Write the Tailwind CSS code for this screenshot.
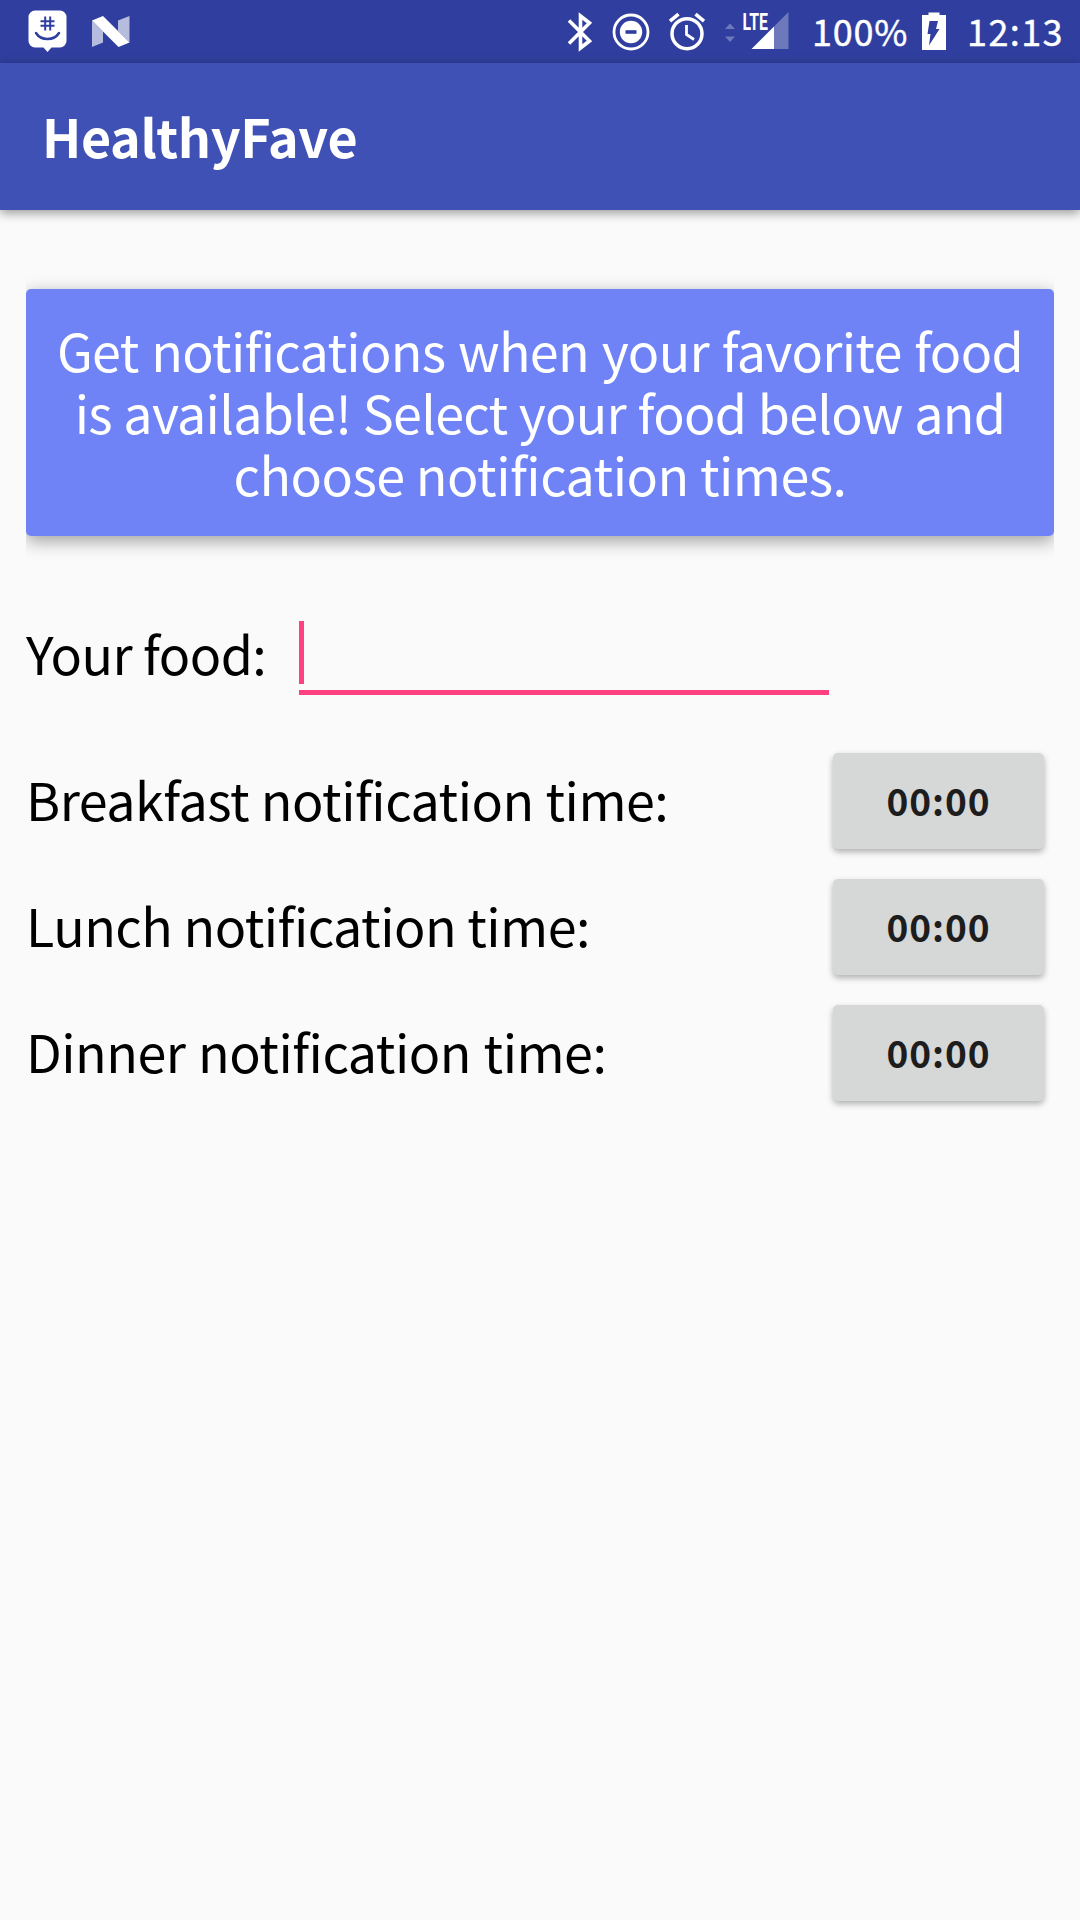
<!DOCTYPE html>
<html lang="en">
<head>
    <meta charset="utf-8"/>
    <meta content="width=device-width, initial-scale=1.0" name="viewport"/>
    <title>HealthyFave</title>
    <script src="https://cdn.jsdelivr.net/npm/@tailwindcss/browser@4"></script>
</head>
<body class="bg-[#fafafa] min-h-screen overflow-hidden font-['Noto_Sans_CJK_SC','Noto_Sans',sans-serif] text-[52px] leading-[62px] text-black whitespace-nowrap">
    <!-- Status bar -->
    <div class="flex h-[63px] bg-[#303f9f] text-white pl-7">
        <svg class="w-[39px] h-[63px]" viewBox="28 0 39 63">
            <path fill="#fff" d="M35 10.500h25a6.500 6.500 0 0 1 6.500 6.500v24a6.500 6.500 0 0 1-6.500 6.500h-8.500L47.500 52l-4-4.500H35a6.500 6.500 0 0 1-6.500-6.500V17a6.500 6.500 0 0 1 6.500-6.500z"/>
            <path fill="none" stroke="#303f9f" stroke-width="2" d="M45.200 16.500v14M50.200 16.500v14M40.500 21.200h14M40.500 25.800h14"/>
            <path fill="none" stroke="#303f9f" stroke-width="2.500" stroke-linecap="round" d="M36 33c5 8 18 8 23 0"/>
        </svg>
        <svg class="w-[38px] h-[63px] ml-[25px]" viewBox="92 0 38 63">
            <path fill="#fff" fill-opacity=".65" d="M92 20.500l11 11V42.500L92 47zM129.500 16v26.500L118 31V20.500z"/>
            <path fill="#fff" d="M92 20.500L103 16l26.500 26.500L118.500 47z"/>
        </svg>
        <svg class="w-[26px] h-[63px] ml-[437px]" viewBox="567 0 26 63">
            <path fill="none" stroke="#fff" stroke-width="3.600" d="M569 20.500L589.500 41l-9 7V16l9 7L569 43.500"/>
        </svg>
        <svg class="w-[38px] h-[63px] ml-[19px]" viewBox="612 0 38 63">
            <circle cx="631" cy="32" r="17" fill="none" stroke="#fff" stroke-width="2.800"/>
            <circle cx="631" cy="32" r="11.200" fill="#fff"/>
            <path fill="#303f9f" d="M625.500 30.200h11v3.600h-11z"/>
        </svg>
        <svg class="w-[38px] h-[63px] ml-[18px]" viewBox="668 0 38 63">
            <circle cx="687" cy="33.700" r="15" fill="none" stroke="#fff" stroke-width="3.500"/>
            <path fill="none" stroke="#fff" stroke-width="3.600" d="M670 21.200l8.500-7M704 21.200l-8.500-7"/>
            <path fill="none" stroke="#fff" stroke-width="2.800" d="M686.500 25v9.500l7.500 5"/>
        </svg>
        <svg class="w-[65px] h-[63px] ml-[18px]" viewBox="724 0 65 63">
            <path fill="#fff" fill-opacity=".3" d="M725 29l5-5.500 5 5.500zM725 36.500h10l-5 5.500z"/>
            <path fill="#fff" fill-opacity=".3" d="M788.500 12v37H774V26.500z"/>
            <path fill="#fff" d="M774 26.500V49h-22.500z"/>
            <text x="742.500" y="30" fill="#fff" font-family="Roboto" font-weight="700" font-size="24" textLength="25.500" lengthAdjust="spacingAndGlyphs">LTE</text>
        </svg>
        <span class="ml-[23px] w-[97px] text-[36px] leading-[60px] tracking-[0.8px] [-webkit-text-stroke:0.4px_white]">100%</span>
        <svg class="w-[24px] h-[63px] ml-[13px]" viewBox="922 0 24 63">
            <path fill="#fff" d="M928.500 12.500h11V15h6.500v35h-24V15h6.500z"/>
            <path fill="#303f9f" d="M929.500 21h8.500l-2 8h3.500l-10.500 16.500 1.500-11.500h-3z"/>
        </svg>
        <span class="ml-[21px] text-[36px] leading-[60px] tracking-[1.4px] [-webkit-text-stroke:0.4px_white]">12:13</span>
    </div>

    <!-- App bar -->
    <div class="relative h-[147px] bg-[#3f51b5] pt-[42px] pl-[42px] text-white font-bold tracking-[-0.4px] shadow-[0_3px_10px_rgba(0,0,0,0.4)]">HealthyFave</div>

    <div class="px-[26px] pt-[79px]">
        <!-- Intro -->
        <div class="[clip-path:inset(-30px_0)]">
            <div class="flex flex-col items-center h-[247px] pt-[30px] rounded-[5px] bg-[#6f83f7] text-white shadow-[0_5px_17px_rgba(0,0,0,0.37)]">
                <span class="tracking-[-0.7px] [word-spacing:1.7px]">Get notifications when your favorite food</span>
                <span class="tracking-[-0.75px] [word-spacing:0.7px]">is available! Select your food below and</span>
                <span class="tracking-[-0.5px]">choose notification times.</span>
            </div>
        </div>

        <!-- Food input -->
        <div class="flex mt-[85px]">
            <label class="w-[273px] pt-px tracking-[-0.6px]">Your food:</label>
            <div class="w-[530px] h-[74px] border-b-[5px] border-[#ff4081]">
                <div class="w-[5px] h-[63px] bg-[#ff4081]"></div>
            </div>
        </div>

        <!-- Notification times -->
        <div class="flex flex-col gap-[30px] mt-[58px] pr-[10px]">
            <div class="flex justify-between h-24">
                <span class="pt-[15px] tracking-[-0.5px] [word-spacing:0.6px]">Breakfast notification time:</span>
                <button class="w-[211px] h-24 pb-[3px] rounded-[5px] bg-[#d6d7d7] text-[#1d1d1d] text-[37px] font-bold tracking-[0.9px] shadow-[0_3px_6px_rgba(0,0,0,0.3)]">00:00</button>
            </div>
            <div class="flex justify-between h-24">
                <span class="pt-[15px] tracking-[-0.53px]">Lunch notification time:</span>
                <button class="w-[211px] h-24 pb-[3px] rounded-[5px] bg-[#d6d7d7] text-[#1d1d1d] text-[37px] font-bold tracking-[0.9px] shadow-[0_3px_6px_rgba(0,0,0,0.3)]">00:00</button>
            </div>
            <div class="flex justify-between h-24">
                <span class="pt-[15px] tracking-[-0.5px] [word-spacing:1.4px]">Dinner notification time:</span>
                <button class="w-[211px] h-24 pb-[3px] rounded-[5px] bg-[#d6d7d7] text-[#1d1d1d] text-[37px] font-bold tracking-[0.9px] shadow-[0_3px_6px_rgba(0,0,0,0.3)]">00:00</button>
            </div>
        </div>
    </div>
</body>
</html>
